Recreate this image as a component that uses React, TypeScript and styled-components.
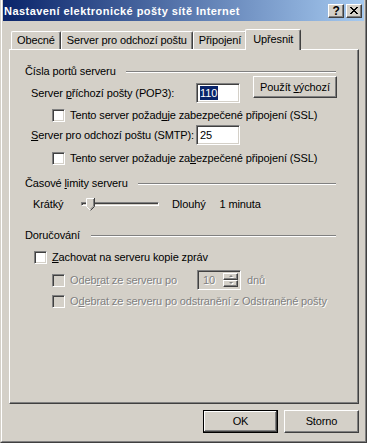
import React from 'react';
import styled, { createGlobalStyle } from 'styled-components';

const FACE = '#D4D0C8';
const SHADOW = '#808080';
const DARK = '#404040';

const GlobalStyle = createGlobalStyle`
    * { box-sizing: border-box; }
    html, body { margin: 0; padding: 0; background: ${FACE}; }
    body {
        font-family: "Liberation Sans", Arial, sans-serif;
        font-size: 11px;
        line-height: 13px;
        letter-spacing: -0.12px;
        color: #000;
    }
`

export default function App() {
    return (
        <>
            <GlobalStyle />
            <Frame>
                <FrameInner>
                    <TitleBar>
                        <TitleText>Nastavení elektronické pošty sítě Internet</TitleText>
                        <CaptionButton>?</CaptionButton>
                        <CaptionButton $gap>
                            <svg width="8" height="7" viewBox="0 0 8 7" shapeRendering="crispEdges">
                                <path
                                    fill="#000"
                                    d="M0 0h2v1H0zM6 0h2v1H6zM1 1h2v1H1zM5 1h2v1H5zM2 2h4v1H2zM3 3h2v1H3zM2 4h4v1H2zM1 5h2v1H1zM5 5h2v1H5zM0 6h2v1H0zM6 6h2v1H6z"
                                />
                            </svg>
                        </CaptionButton>
                    </TitleBar>
                    <Body>
                        <TabStrip>
                            <Tab>Obecné</Tab>
                            <Tab>Server pro odchozí poštu</Tab>
                            <Tab>Připojení</Tab>
                            <Tab $active>Upřesnit</Tab>
                        </TabStrip>
                        <Panel>
                            <SectionHead $line={101}>
                                <span>Čísla portů serveru</span>
                                <Etch />
                            </SectionHead>
                            <PortRow>
                                <Field>
                                    <FieldLabel>Server <U>p</U>říchozí pošty (POP3):</FieldLabel>
                                    <TextBox><Selected>110</Selected></TextBox>
                                </Field>
                                <DefaultsButton>Použít <U>v</U>ýchozí</DefaultsButton>
                            </PortRow>
                            <CheckRow $top={6} $indent={27}>
                                <Check />
                                <Caption>Tento server požad<U>u</U>je zabezpečené připojení (SSL)</Caption>
                            </CheckRow>
                            <Field $top={3}>
                                <FieldLabel><U>S</U>erver pro odchozí poštu (SMTP):</FieldLabel>
                                <TextBox>25</TextBox>
                            </Field>
                            <CheckRow $top={7} $indent={27}>
                                <Check />
                                <Caption>Tento server požaduje za<U>b</U>ezpečené připojení (SSL)</Caption>
                            </CheckRow>

                            <SectionHead $line={113} $top={12}>
                                <span>Časové <U>l</U>imity serveru</span>
                                <Etch />
                            </SectionHead>
                            <SliderRow>
                                <Caption $w={48}>Krátký</Caption>
                                <Track>
                                    <Groove />
                                    <Thumb>
                                        <svg width="9" height="13" viewBox="0 0 9 13">
                                            <polygon points="0,0 9,0 9,8.5 4.5,13 0,8.5" fill={FACE} />
                                            <polyline points="0.5,8.5 0.5,0.5 8,0.5" fill="none" stroke="#fff" />
                                            <polyline points="0.5,8.5 4.5,12.5" fill="none" stroke="#fff" />
                                            <polyline points="8.5,0 8.5,8.5 4.5,12.5" fill="none" stroke={DARK} />
                                            <polyline points="7.5,1 7.5,8.1 4.5,11.1" fill="none" stroke={SHADOW} />
                                        </svg>
                                    </Thumb>
                                </Track>
                                <Caption $gap={13}>Dlouhý</Caption>
                                <Caption $gap={14}>1 minuta</Caption>
                            </SliderRow>

                            <SectionHead $line={66} $top={18}>
                                <span>Doručování</span>
                                <Etch />
                            </SectionHead>
                            <CheckRow $top={9} $indent={9}>
                                <Check />
                                <Caption><U>Z</U>achovat na serveru kopie zpráv</Caption>
                            </CheckRow>
                            <CheckRow $top={6} $indent={27} $tall>
                                <Check $disabled />
                                <Caption $disabled $w={127}>Odeb<U>r</U>at ze serveru po</Caption>
                                <SpinBox>
                                    <SpinValue>10</SpinValue>
                                    <SpinButtons>
                                        <SpinButton>
                                            <svg width="6" height="4" viewBox="0 0 6 4">
                                                <polygon points="3,0 5,2 1,2" fill="#fff" transform="translate(1,1)" />
                                                <polygon points="3,0 5,2 1,2" fill={SHADOW} />
                                            </svg>
                                        </SpinButton>
                                        <SpinButton>
                                            <svg width="6" height="4" viewBox="0 0 6 4">
                                                <polygon points="1,0 5,0 3,2" fill="#fff" transform="translate(1,1)" />
                                                <polygon points="1,0 5,0 3,2" fill={SHADOW} />
                                            </svg>
                                        </SpinButton>
                                    </SpinButtons>
                                </SpinBox>
                                <Caption $disabled $gap={6}>dnů</Caption>
                            </CheckRow>
                            <CheckRow $top={5} $indent={27}>
                                <Check $disabled />
                                <Caption $disabled>O<U>d</U>ebrat ze serveru po odstranění z Odstraněné pošty</Caption>
                            </CheckRow>
                        </Panel>
                        <Footer>
                            <DialogButton $default>OK</DialogButton>
                            <DialogButton>Storno</DialogButton>
                        </Footer>
                    </Body>
                </FrameInner>
            </Frame>
        </>
    );
}

const Frame = styled.div`
    width: 367px;
    height: 443px;
    background: ${FACE};
    border-left: 1px solid ${FACE};
    border-right: 1px solid ${DARK};
    border-bottom: 1px solid ${DARK};
`

const FrameInner = styled.div`
    height: 100%;
    border-left: 1px solid #fff;
    border-right: 1px solid ${SHADOW};
    border-bottom: 1px solid ${SHADOW};
    padding: 0 1px 1px 1px;
    display: flex;
    flex-direction: column;
`

const TitleBar = styled.div`
    height: 21px;
    flex: none;
    display: flex;
    align-items: center;
    padding: 0 2px 0 1px;
    background: linear-gradient(to right, #0A246A, #A6CAF0);
`

const TitleText = styled.div`
    flex: 1;
    padding-top: 2px;
    color: #fff;
    font-weight: bold;
    letter-spacing: 0.45px;
    white-space: nowrap;
`

const CaptionButton = styled.div<{$gap?: boolean}>`
    width: 16px;
    height: 14px;
    margin-left: ${({$gap}) => $gap ? '2px' : '0'};
    display: flex;
    align-items: center;
    justify-content: center;
    background: ${FACE};
    border-top: 1px solid #fff;
    border-left: 1px solid #fff;
    border-right: 1px solid ${DARK};
    border-bottom: 1px solid ${DARK};
    box-shadow: inset -1px -1px ${SHADOW};
    font-weight: bold;
    font-size: 12px;
    line-height: 12px;
`

const Body = styled.div`
    flex: 1;
    padding: 8px 5px 0 6px;
    display: flex;
    flex-direction: column;
`

const TabStrip = styled.div`
    height: 20px;
    display: flex;
    align-items: flex-end;
    padding-left: 2px;
`

const Tab = styled.div<{$active?: boolean}>`
    position: relative;
    z-index: ${({$active}) => $active ? 1 : 0};
    height: ${({$active}) => $active ? '21px' : '18px'};
    margin: ${({$active}) => $active ? '0 -2px -1px -2px' : '0'};
    padding: ${({$active}) => $active ? '0 7px 2px' : '0 5px'};
    display: flex;
    align-items: center;
    white-space: nowrap;
    background: ${FACE};
    border-top: 1px solid #fff;
    border-left: 1px solid #fff;
    border-right: 1px solid ${DARK};
    border-radius: 2px 2px 0 0;
    box-shadow: inset -1px 0 ${SHADOW};
`

const Panel = styled.div`
    height: 355px;
    flex: none;
    padding: 15px 22px 0 15px;
    display: flex;
    flex-direction: column;
    border-top: 1px solid #fff;
    border-left: 1px solid #fff;
    border-right: 1px solid ${DARK};
    border-bottom: 1px solid ${DARK};
    box-shadow: inset -1px -1px ${SHADOW};
`

const SectionHead = styled.div<{$line: number; $top?: number}>`
    height: 13px;
    margin-top: ${({$top}) => $top ?? 0}px;
    display: grid;
    grid-template-columns: ${({$line}) => $line}px 1fr;
    align-items: center;
    white-space: nowrap;
`

const Etch = styled.div`
    height: 2px;
    border-top: 1px solid ${SHADOW};
    border-bottom: 1px solid #fff;
`

const U = styled.span`
    text-decoration: underline;
    text-underline-offset: 1px;
`

const PortRow = styled.div`
    margin-top: -2px;
    display: flex;
    align-items: flex-end;
`

const Field = styled.div<{$top?: number}>`
    height: 20px;
    margin-top: ${({$top}) => $top ?? 0}px;
    padding-left: 6px;
    display: flex;
    align-items: center;
`

const FieldLabel = styled.span`
    width: 165px;
    white-space: nowrap;
`

const Sunken = styled.div`
    border-top: 1px solid ${SHADOW};
    border-left: 1px solid ${SHADOW};
    border-right: 1px solid #fff;
    border-bottom: 1px solid #fff;
    box-shadow: inset 1px 1px ${DARK}, inset -1px -1px ${FACE};
`

const TextBox = styled(Sunken)`
    width: 44px;
    height: 20px;
    padding: 0 3px;
    display: flex;
    align-items: center;
    background: #fff;
`

const Selected = styled.span`
    height: 14px;
    line-height: 14px;
    padding-right: 1px;
    background: #0A246A;
    color: #fff;
`

const Raised = styled.button`
    font: inherit;
    letter-spacing: inherit;
    color: #000;
    padding: 0;
    background: ${FACE};
    border-top: 1px solid #fff;
    border-left: 1px solid #fff;
    border-right: 1px solid ${DARK};
    border-bottom: 1px solid ${DARK};
    box-shadow: inset -1px -1px ${SHADOW};
`

const DefaultsButton = styled(Raised)`
    width: 85px;
    height: 22px;
    margin: 0 -1px 5px 13px;
    white-space: nowrap;
`

const CheckRow = styled.div<{$top: number; $indent: number; $tall?: boolean}>`
    height: ${({$tall}) => $tall ? '20px' : '13px'};
    margin-top: ${({$top}) => $top}px;
    padding-left: ${({$indent}) => $indent}px;
    display: flex;
    align-items: center;
    white-space: nowrap;
`

const Check = styled(Sunken)<{$disabled?: boolean}>`
    width: 13px;
    height: 13px;
    flex: none;
    margin-right: 5px;
    background: ${({$disabled}) => $disabled ? FACE : '#fff'};
`

const Caption = styled.span<{$disabled?: boolean; $w?: number; $gap?: number}>`
    flex: none;
    white-space: nowrap;
    width: ${({$w}) => $w ? `${$w}px` : 'auto'};
    margin-left: ${({$gap}) => $gap ?? 0}px;
    color: ${({$disabled}) => $disabled ? SHADOW : '#000'};
    text-shadow: ${({$disabled}) => $disabled ? '1px 1px 0 #fff' : 'none'};
`

const SliderRow = styled.div`
    height: 13px;
    margin-top: 8px;
    padding-left: 8px;
    display: flex;
    align-items: center;
`

const Track = styled.div`
    position: relative;
    width: 78px;
    height: 13px;
    flex: none;
`

const Groove = styled.div`
    height: 4px;
    margin-top: 4px;
    border-top: 1px solid ${SHADOW};
    border-left: 1px solid ${SHADOW};
    border-right: 1px solid #fff;
    border-bottom: 1px solid #fff;
    box-shadow: inset 1px 1px ${DARK};
`

const Thumb = styled.div`
    position: absolute;
    left: 5px;
    top: 0;
    width: 9px;
    height: 13px;
    display: flex;

    svg { display: block; }
`

const SpinBox = styled(Sunken)`
    width: 44px;
    height: 20px;
    flex: none;
    display: flex;
    padding: 2px;
    background: ${FACE};
`

const SpinValue = styled.div`
    flex: 1;
    padding-left: 3px;
    display: flex;
    align-items: center;
    color: ${SHADOW};
    text-shadow: 1px 1px 0 #fff;
`

const SpinButtons = styled.div`
    width: 15px;
    display: flex;
    flex-direction: column;
`

const SpinButton = styled.div`
    flex: 1;
    display: flex;
    align-items: center;
    justify-content: center;
    border-top: 1px solid #fff;
    border-left: 1px solid #fff;
    border-right: 1px solid ${DARK};
    border-bottom: 1px solid ${DARK};
    box-shadow: inset -1px -1px ${SHADOW};

    svg { display: block; }
`

const Footer = styled.div`
    margin-top: 6px;
    display: flex;
    justify-content: flex-end;
    gap: 6px;
`

const DialogButton = styled(Raised)<{$default?: boolean}>`
    width: 75px;
    height: 23px;
    ${({$default}) => $default && `
        border: 1px solid #000;
        box-shadow: inset -1px -1px ${DARK}, inset 1px 1px #fff, inset -2px -2px ${SHADOW};
    `}
`
